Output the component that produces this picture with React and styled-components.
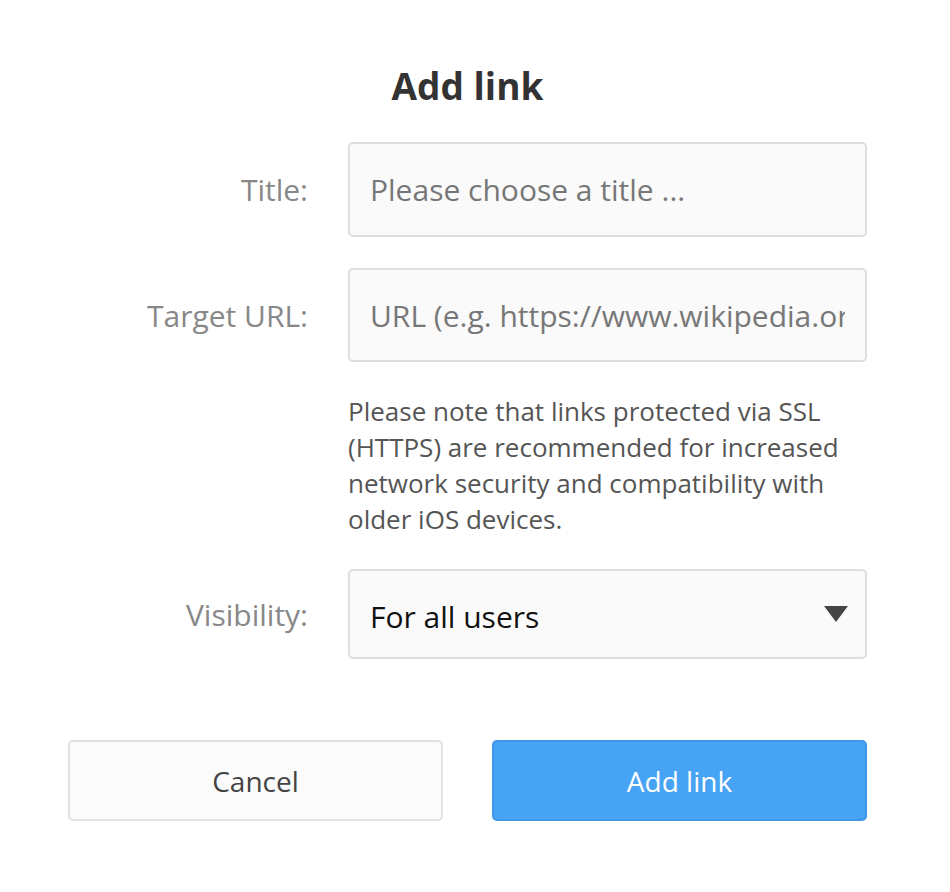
import React from 'react';
import styled, { createGlobalStyle } from 'styled-components';

const GlobalStyle = createGlobalStyle`
  body {
    margin: 0;
    background: #ffffff;
    font-family: "Open Sans", "Noto Sans", sans-serif;
  }
`;

const Dialog = styled.div`
  width: 799px;
  margin-left: 68px;
  padding-top: 61px;
`;

const Title = styled.h1`
  margin: 0 0 31px;
  text-align: center;
  font-size: 37px;
  line-height: 50px;
  font-weight: 700;
  color: #333333;
`;

const Row = styled.div`
  display: grid;
  grid-template-columns: 240px 519px;
  column-gap: 40px;
  align-items: center;
  margin-bottom: ${p => p.$gap || 0}px;
`;

const Label = styled.label`
  text-align: right;
  font-size: 30px;
  color: #888888;
`;

const Input = styled.input`
  box-sizing: border-box;
  width: 100%;
  height: ${p => p.$h || 95}px;
  padding: 0 20px;
  border: 2px solid #dedede;
  border-radius: 5px;
  background: #fafafa;
  font-family: inherit;
  font-size: 30px;
  color: #333333;
  outline: none;

  &::placeholder {
    color: #777777;
  }
`;

const Note = styled.p`
  grid-column: 2;
  margin: 0;
  font-size: 26px;
  line-height: 36px;
  color: #555555;
`;

const SelectBox = styled.div`
  box-sizing: border-box;
  height: 90px;
  padding: 0 17px 0 20px;
  border: 2px solid #dedede;
  border-radius: 5px;
  background: #fafafa;
  display: flex;
  align-items: center;
  justify-content: space-between;
  font-size: 30px;
  color: #111111;
`;

const SelectValue = styled.span`
  padding-top: 4px;
`;

const Caret = styled.span`
  width: 0;
  height: 0;
  border-left: 12px solid transparent;
  border-right: 12px solid transparent;
  border-top: 16px solid #444444;
`;

const Actions = styled.div`
  display: grid;
  grid-template-columns: 1fr 1fr;
  column-gap: 49px;
`;

const Button = styled.button`
  box-sizing: border-box;
  height: 81px;
  border-radius: 5px;
  font-family: inherit;
  font-size: 28px;
  cursor: pointer;
  border: 2px solid ${p => (p.$primary ? '#3f97e6' : '#e2e2e2')};
  background: ${p => (p.$primary ? '#47a4f4' : '#fbfbfb')};
  color: ${p => (p.$primary ? '#ffffff' : '#444444')};
`;

export default function App() {
  return (
    <>
      <GlobalStyle />
      <Dialog>
        <Title>Add link</Title>
        <Row $gap={31}>
          <Label>Title:</Label>
          <Input placeholder="Please choose a title ..." />
        </Row>
        <Row $gap={31}>
          <Label>Target URL:</Label>
          <Input $h={94} placeholder="URL (e.g. https://www.wikipedia.org)" />
        </Row>
        <Row $gap={32}>
          <Note>
            Please note that links protected via SSL (HTTPS) are recommended for increased
            network security and compatibility with older iOS devices.
          </Note>
        </Row>
        <Row $gap={81}>
          <Label>Visibility:</Label>
          <SelectBox>
            <SelectValue>For all users</SelectValue>
            <Caret />
          </SelectBox>
        </Row>
        <Actions>
          <Button>Cancel</Button>
          <Button $primary>Add link</Button>
        </Actions>
      </Dialog>
    </>
  );
}
